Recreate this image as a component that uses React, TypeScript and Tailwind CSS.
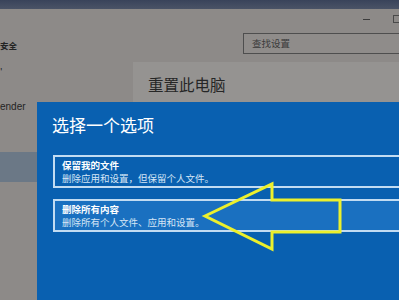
import React from "react";

const OPTIONS = [
  { title: "保留我的文件", desc: "删除应用和设置，但保留个人文件。", active: false },
  { title: "删除所有内容", desc: "删除所有个人文件、应用和设置。", active: true },
];

export default function App() {
  return (
    <div className="relative h-[300px] w-[399px] overflow-hidden bg-[#8d8a88] font-['Noto_Sans_CJK_SC','Noto_Sans',sans-serif] text-[#242424]">
      {/* desktop strip */}
      <div className="h-[9px] bg-gradient-to-b from-[#39435a] to-[#4a5366]" />

      <div className="flex">
        {/* sidebar */}
        <aside className="w-[133px] shrink-0">
          <div className="mt-[31px] text-[8.5px] font-bold leading-[10px]">安全</div>
          <div className="mt-[17px] text-[9px] leading-[10px]">'</div>
          <div className="mt-[24px] font-['Liberation_Sans',sans-serif] text-[10px] leading-[12px]">ender</div>
          <div className="mt-[39px] h-[30px] bg-[#6b7886]" />
        </aside>

        {/* main */}
        <main className="min-w-0 flex-1">
          <div className="h-[53px]">
            <div className="flex h-[20px] items-center justify-end gap-[23px]">
              <span className="h-px w-[7px] bg-[#3c3c3c]" />
              <span className="mr-[-4px] h-[8px] w-[10px] border border-[#4a4a4a]" />
            </div>
            <div className="ml-[110px] mt-[4px] flex h-[21px] w-[180px] items-center border border-[#4e4e4e] bg-[#8f8c8a] pl-[8px] text-[9.5px] text-[#3a3a3a]">
              查找设置
            </div>
          </div>
          <div className="h-[240px] bg-[#959391] pl-[15px] pt-[12px]">
            <h1 className="text-[15.5px] leading-[20px] text-[#262626]">重置此电脑</h1>
          </div>
        </main>
      </div>

      {/* reset dialog */}
      <div className="absolute bottom-0 left-[37px] right-0 top-[102px] bg-[#0960b0] pl-[15px] pt-[12px] text-white">
        <div className="text-[17px] leading-[22px]">选择一个选项</div>
        <div className="mt-[19px] flex flex-col gap-[11px] pl-px">
          {OPTIONS.map((o) => (
            <div
              key={o.title}
              className={`h-[33px] w-[400px] border-2 border-[#c2dcf2] pb-px pl-[7px] pt-[2px] ${o.active ? "bg-[#1a70c0]" : ""}`}
            >
              <div className="text-[9.5px] font-bold leading-[13px]">{o.title}</div>
              <div className="text-[9.5px] leading-[13px] text-[#d6e6f6]">{o.desc}</div>
            </div>
          ))}
        </div>
      </div>

      {/* yellow arrow annotation */}
      <svg className="pointer-events-none absolute inset-0" width="399" height="300" viewBox="0 0 399 300">
        <polygon
          points="205,216 272,184 272,200 340,200 340,232 272,232 272,249"
          fill="none"
          stroke="#ecf02c"
          strokeWidth="3"
          strokeLinejoin="miter"
        />
      </svg>
    </div>
  );
}
